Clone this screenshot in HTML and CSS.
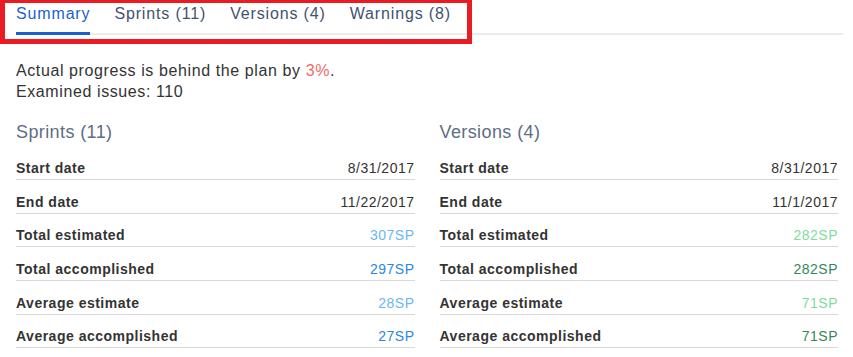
FILE: index.html
```html
<!DOCTYPE html>
<html lang="en">
<head>
    <meta charset="UTF-8">
    <meta name="viewport" content="width=device-width, initial-scale=1.0">
    <title>Progress Summary</title>
    <link rel="stylesheet" href="styles.css">
</head>
<body>
    <div class="page">
        <ul class="tabs">
            <li class="tab active">Summary</li>
            <li class="tab">Sprints (11)</li>
            <li class="tab">Versions (4)</li>
            <li class="tab">Warnings (8)</li>
        </ul>
        <div class="highlight"></div>

        <div class="summary">
            <p>Actual progress is behind the plan by <span class="behind">3%</span>.</p>
            <p>Examined issues: 110</p>
        </div>

        <div class="columns">
            <div class="stats">
                <h3>Sprints (11)</h3>
                <div class="row"><span class="label">Start date</span><span class="value">8/31/2017</span></div>
                <div class="row"><span class="label">End date</span><span class="value">11/22/2017</span></div>
                <div class="row"><span class="label">Total estimated</span><span class="value blue-light">307SP</span></div>
                <div class="row"><span class="label">Total accomplished</span><span class="value blue">297SP</span></div>
                <div class="row"><span class="label">Average estimate</span><span class="value blue-light">28SP</span></div>
                <div class="row"><span class="label">Average accomplished</span><span class="value blue">27SP</span></div>
            </div>

            <div class="stats">
                <h3>Versions (4)</h3>
                <div class="row"><span class="label">Start date</span><span class="value">8/31/2017</span></div>
                <div class="row"><span class="label">End date</span><span class="value">11/1/2017</span></div>
                <div class="row"><span class="label">Total estimated</span><span class="value green-light">282SP</span></div>
                <div class="row"><span class="label">Total accomplished</span><span class="value green">282SP</span></div>
                <div class="row"><span class="label">Average estimate</span><span class="value green-light">71SP</span></div>
                <div class="row"><span class="label">Average accomplished</span><span class="value green">71SP</span></div>
            </div>
        </div>
    </div>
</body>
</html>
```

FILE: styles.css
```css
body {
    margin: 0;
    font-family: "Liberation Sans", Arial, sans-serif;
    color: #333;
    background-color: #fff;
}

.page {
    position: relative;
    padding: 0 15px 0 16px;
}

.tabs {
    list-style: none;
    margin: 0 -5px 0 0;
    padding: 4px 0 0;
    display: flex;
    gap: 24px;
    border-bottom: 2px solid #ebecf0;
}

.tab {
    font-size: 16px;
    line-height: 20px;
    letter-spacing: 0.85px;
    color: #42526e;
    padding-bottom: 8px;
    margin-bottom: -2px;
    border-bottom: 3px solid transparent;
}

.tab.active {
    color: #1c5fd0;
    border-bottom-color: #1c5fd0;
}

/* red annotation frame drawn over the tab bar */
.highlight {
    position: absolute;
    left: 0;
    top: -2px;
    width: 472px;
    height: 46px;
    box-sizing: border-box;
    border: 5px solid #e91c24;
}

.summary {
    margin-top: 25px;
    font-size: 16px;
    line-height: 21px;
    letter-spacing: 0.6px;
}

.summary p {
    margin: 0;
}

.behind {
    color: #f06b6b;
}

.columns {
    display: flex;
    gap: 25px;
    margin-top: 19px;
}

.stats {
    flex: 1;
}

.stats h3 {
    margin: 0 0 3.3px;
    font-size: 18px;
    line-height: 22px;
    font-weight: normal;
    letter-spacing: 0.4px;
    color: #5e6c84;
}

.row {
    display: flex;
    justify-content: space-between;
    font-size: 14px;
    line-height: 20px;
    letter-spacing: 0.5px;
    padding: 11.67px 0 1px;
    border-bottom: 1px solid #d9d9d9;
}

.label {
    font-weight: bold;
    color: #333;
}

.value {
    color: #333;
}

.blue-light {
    color: #6cb6f5;
}

.blue {
    color: #2a87e3;
}

.green-light {
    color: #7fdc9f;
}

.green {
    color: #35875a;
}
```
